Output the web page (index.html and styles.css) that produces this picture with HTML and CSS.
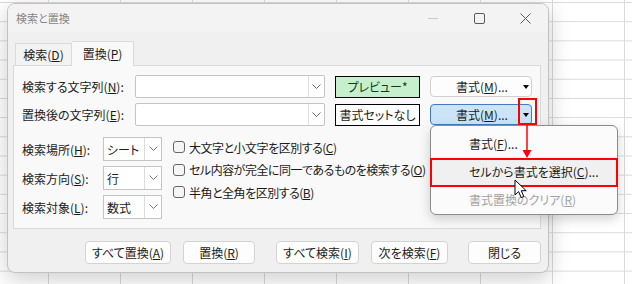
FILE: index.html
```html
<!DOCTYPE html>
<html>
<head>
    <title>検索と置換</title>
    <meta charset="UTF-8">
    <link rel="stylesheet" href="styles.css">
</head>
<body>
    <div class="dialog">
        <div class="titlebar">
            <span class="title">検索と置換</span>
            <div class="controls">
                <span class="ctl"><svg width="10" height="10"><line x1="0" y1="5.5" x2="10" y2="5.5" stroke="#c9c9c9" stroke-width="1"/></svg></span>
                <span class="ctl"><svg width="11" height="11"><rect x="0.5" y="0.5" width="10" height="10" rx="1.5" fill="none" stroke="#5a5a5a" stroke-width="1"/></svg></span>
                <span class="ctl"><svg width="11" height="11"><path d="M0.5 0.5 L10.5 10.5 M10.5 0.5 L0.5 10.5" stroke="#5a5a5a" stroke-width="1"/></svg></span>
            </div>
        </div>

        <div class="body">
            <div class="tabs">
                <div class="tab">検索(<u>D</u>)</div>
                <div class="tab active">置換(<u>P</u>)</div>
            </div>

            <div class="panel">
                <div class="rows">
                    <div class="row">
                        <span class="lbl">検索する文字列(<u>N</u>):</span>
                        <div class="combo"><span class="drop"><svg width="9" height="6"><polyline points="0.5,0.5 4.5,4.5 8.5,0.5" fill="none" stroke="#666"/></svg></span></div>
                        <div class="preview good">プレビュー*</div>
                        <div class="fmt">
                            <span class="ftxt">書式(<u>M</u>)...</span>
                            <span class="fsplit"><span class="tri"></span></span>
                        </div>
                    </div>
                    <div class="row">
                        <span class="lbl">置換後の文字列(<u>E</u>):</span>
                        <div class="combo"><span class="drop"><svg width="9" height="6"><polyline points="0.5,0.5 4.5,4.5 8.5,0.5" fill="none" stroke="#666"/></svg></span></div>
                        <div class="preview">書式セットなし</div>
                        <div class="fmt pressed">
                            <span class="ftxt">書式(<u>M</u>)...</span>
                            <span class="fsplit"><span class="tri"></span></span>
                        </div>
                    </div>
                </div>

                <div class="options">
                    <div class="selects">
                        <div class="srow">
                            <span class="slbl">検索場所(<u>H</u>):</span>
                            <div class="select"><span class="sval">シート</span><span class="sbtn"><svg width="9" height="6"><polyline points="0.5,0.5 4.5,4.5 8.5,0.5" fill="none" stroke="#777"/></svg></span></div>
                        </div>
                        <div class="srow">
                            <span class="slbl">検索方向(<u>S</u>):</span>
                            <div class="select"><span class="sval">行</span><span class="sbtn"><svg width="9" height="6"><polyline points="0.5,0.5 4.5,4.5 8.5,0.5" fill="none" stroke="#777"/></svg></span></div>
                        </div>
                        <div class="srow">
                            <span class="slbl">検索対象(<u>L</u>):</span>
                            <div class="select"><span class="sval">数式</span><span class="sbtn"><svg width="9" height="6"><polyline points="0.5,0.5 4.5,4.5 8.5,0.5" fill="none" stroke="#777"/></svg></span></div>
                        </div>
                    </div>
                    <div class="checks">
                        <div class="check"><span class="box"></span>大文字と小文字を区別する(<u>C</u>)</div>
                        <div class="check"><span class="box"></span>セル内容が完全に同一であるものを検索する(<u>O</u>)</div>
                        <div class="check"><span class="box"></span>半角と全角を区別する(<u>B</u>)</div>
                    </div>
                </div>
            </div>

            <div class="buttons">
                <div class="btn w-all">すべて置換(<u>A</u>)</div>
                <div class="btn w-rep">置換(<u>R</u>)</div>
                <div class="btn w-find">すべて検索(<u>I</u>)</div>
                <div class="btn w-next">次を検索(<u>F</u>)</div>
                <div class="btn w-close">閉じる</div>
            </div>
        </div>

        <div class="menu">
            <div class="item">書式(<u>F</u>)...</div>
            <div class="item hover">セルから書式を選択(<u>C</u>)...</div>
            <div class="item disabled">書式置換のクリア(<u>R</u>)</div>
        </div>

        <div class="mark mark-split"></div>
        <div class="mark mark-item"></div>
        <svg class="red-arrow" width="10" height="33">
            <line x1="5" y1="0" x2="5" y2="26" stroke="#f00" stroke-width="1.5"/>
            <polygon points="0.5,25 9.5,25 5,33" fill="#f00"/>
        </svg>
        <svg class="cursor" width="14" height="21">
            <path d="M1 1 L1 16 L4.6 12.6 L7.2 18.6 L9.8 17.5 L7.3 11.7 L12.2 11.7 Z" fill="#fff" stroke="#000" stroke-width="1" stroke-linejoin="round"/>
        </svg>
    </div>
</body>
</html>
```

FILE: styles.css
```css
* {
    box-sizing: border-box;
}
body {
    margin: 0;
    padding: 3px 0 0 7px;
    width: 632px;
    height: 284px;
    overflow: hidden;
    font-family: "Noto Sans CJK JP", sans-serif;
    font-size: 12px;
    font-feature-settings: "palt";
    color: #1b1b1b;
    background-color: #fff;
    background-image:
        linear-gradient(to right, #dadada 1px, transparent 1px),
        linear-gradient(to bottom, #dadada 1px, transparent 1px);
    background-size: 72px 100%, 100% 19.2px;
    background-position: 48px 0, 0 2px;
}
u {
    text-underline-offset: 1px;
}

/* window */
.dialog {
    position: relative;
    width: 542px;
    height: 270px;
    border: 1px solid #c2c2c2;
    border-radius: 8px;
    background: #f0f0f0;
    box-shadow: 0 6px 22px rgba(0, 0, 0, 0.2);
}
.titlebar {
    display: flex;
    align-items: center;
    height: 28px;
    padding-left: 8px;
    background: #f3f3f3;
    border-radius: 7px 7px 0 0;
}
.title {
    font-size: 11px;
    color: #858585;
}
.controls {
    margin-left: auto;
    display: flex;
}
.ctl {
    width: 46px;
    height: 28px;
    display: flex;
    align-items: center;
    justify-content: center;
}
.body {
    padding: 9px 0 0 5px;
}

/* tabs */
.tabs {
    display: flex;
    align-items: flex-end;
    height: 24px;
    padding-left: 2px;
}
.tab {
    height: 22px;
    width: 57px;
    display: flex;
    align-items: center;
    justify-content: center;
    background: #f3f3f3;
    border: 1px solid #dadada;
    border-bottom: none;
}
.tab.active {
    position: relative;
    z-index: 1;
    width: 62px;
    height: 25px;
    margin-bottom: -1px;
    background: #f9f9f9;
    border-left: none;
    padding-bottom: 2px;
}
.panel {
    width: 528px;
    height: 164px;
    border: 1px solid #dadada;
    background: #f9f9f9;
    padding: 9px 8px 0 8px;
}

/* find / replace rows */
.rows {
    display: flex;
    flex-direction: column;
    gap: 5px;
}
.row {
    display: flex;
    align-items: center;
    height: 23px;
}
.lbl {
    width: 113px;
}
.combo {
    width: 190px;
    height: 23px;
    background: #fff;
    border: 1px solid #c4c4c4;
    border-radius: 2px;
    display: flex;
    justify-content: flex-end;
}
.drop {
    width: 16px;
    border-left: 1px solid #e0e0e0;
    display: flex;
    align-items: center;
    justify-content: center;
}
.preview {
    margin-left: 10px;
    width: 85px;
    height: 22px;
    border: 1px solid #000;
    background: #fff;
    display: flex;
    align-items: center;
    justify-content: center;
}
.good {
    background: #c6efce;
    color: #0b3d12;
}
.fmt {
    margin-left: 10px;
    width: 102px;
    height: 21px;
    display: flex;
    align-items: center;
    padding-left: 14px;
    background: #fdfdfd;
    border: 1px solid #d0d0d0;
    border-radius: 4px;
}
.ftxt {
    flex: 1;
    text-align: center;
}
.fsplit {
    width: 12px;
    height: 13px;
    display: flex;
    align-items: center;
    justify-content: center;
    border-left: 1px solid transparent;
}
.pressed {
    background: #cce4f7;
    border-color: #3e7dc6;
}
.pressed .fsplit {
    border-left-color: #a4c3df;
}
.tri {
    width: 0;
    height: 0;
    border-left: 3px solid transparent;
    border-right: 3px solid transparent;
    border-top: 4px solid #000;
}

/* options */
.options {
    display: flex;
    margin-top: 11px;
}
.selects {
    display: flex;
    flex-direction: column;
    gap: 5px;
}
.srow {
    display: flex;
    align-items: center;
    height: 24px;
}
.slbl {
    width: 81px;
}
.select {
    width: 59px;
    height: 24px;
    display: flex;
    background: #fff;
    border: 1px solid #c4c4c4;
}
.sval {
    flex: 1;
    padding-left: 3px;
    display: flex;
    align-items: center;
}
.sbtn {
    width: 17px;
    border-left: 1px solid #dcdcdc;
    display: flex;
    align-items: center;
    justify-content: center;
}
.checks {
    margin-left: 11px;
    margin-top: -1px;
}
.check {
    height: 22.5px;
    display: flex;
    align-items: center;
    letter-spacing: -0.5px;
}
.box {
    width: 12px;
    height: 12px;
    margin-right: 4px;
    border: 1px solid #666;
    border-radius: 3px;
    background: #f5f5f5;
}

/* bottom buttons */
.buttons {
    display: flex;
    margin-top: 12px;
    margin-left: 72px;
}
.btn {
    height: 23px;
    display: flex;
    align-items: center;
    justify-content: center;
    background: #fdfdfd;
    border: 1px solid #d3d3d3;
    border-radius: 4px;
}
.w-all { width: 86px; }
.w-rep { width: 72px; margin-left: 12px; }
.w-find { width: 83px; margin-left: 21px; }
.w-next { width: 77px; margin-left: 12px; }
.w-close { width: 73px; margin-left: 20px; }

/* split button menu */
.menu {
    position: absolute;
    left: 422px;
    top: 121px;
    width: 188px;
    height: 90px;
    padding-top: 3px;
    background: #fbfbfb;
    border: 1px solid #8c8c8c;
    border-radius: 6px;
    box-shadow: 0 4px 12px rgba(0, 0, 0, 0.18);
    z-index: 2;
}
.item {
    height: 28px;
    display: flex;
    align-items: center;
    padding-left: 38px;
}
.item.hover {
    background: #f0f0f0;
}
.item.disabled {
    color: #a3a3a3;
}

/* annotations */
.mark {
    position: absolute;
    border: 2px solid #f00;
    z-index: 3;
}
.mark-split {
    left: 510px;
    top: 94px;
    width: 19px;
    height: 27px;
}
.mark-item {
    left: 422px;
    top: 154px;
    width: 188px;
    height: 29px;
}
.red-arrow {
    position: absolute;
    left: 514px;
    top: 121px;
    z-index: 3;
}
.cursor {
    position: absolute;
    left: 506px;
    top: 175px;
    z-index: 4;
}
```
